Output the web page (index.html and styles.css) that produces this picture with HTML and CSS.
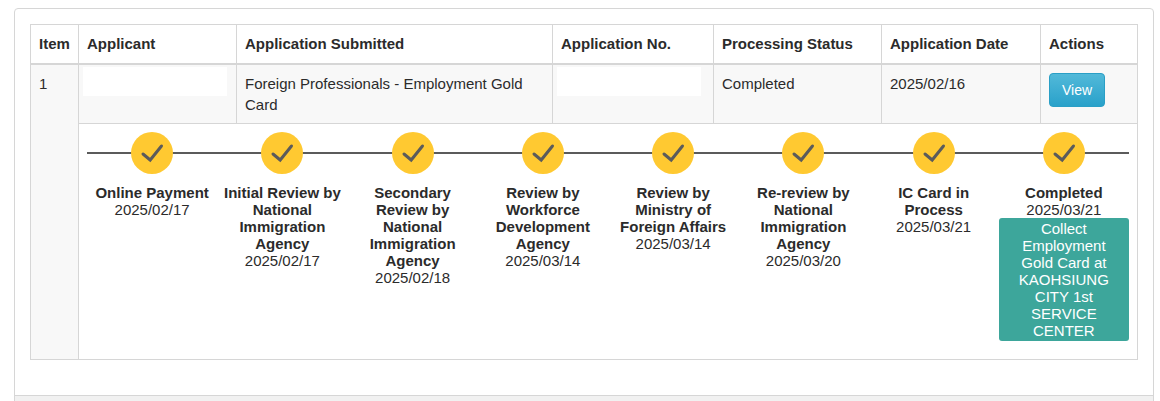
FILE: index.html
```html
<!DOCTYPE html>
<html lang="en">
<head>
    <meta charset="UTF-8">
    <meta name="viewport" content="width=device-width, initial-scale=1.0">
    <title>Application Status</title>
    <link rel="stylesheet" href="styles.css">
</head>
<body>
    <svg class="symbols" aria-hidden="true">
        <symbol id="check" viewBox="0 0 42 42">
            <circle cx="21" cy="21" r="21" fill="#ffc931"/>
            <path d="M12 22 L19.2 28 L30.5 14" fill="none" stroke="#5b5b5b" stroke-width="3" stroke-linecap="round"/>
        </symbol>
    </svg>

    <div class="panel">
        <div class="panel-body">
            <table class="table">
                <thead>
                    <tr>
                        <th class="col-item">Item</th>
                        <th class="col-applicant">Applicant</th>
                        <th>Application Submitted</th>
                        <th class="col-no">Application No.</th>
                        <th class="col-status">Processing Status</th>
                        <th class="col-date">Application Date</th>
                        <th class="col-actions">Actions</th>
                    </tr>
                </thead>
                <tbody>
                    <tr class="record">
                        <td rowspan="2">1</td>
                        <td class="masked"><div class="mask"></div></td>
                        <td>Foreign Professionals - Employment Gold Card</td>
                        <td class="masked"><div class="mask"></div></td>
                        <td>Completed</td>
                        <td>2025/02/16</td>
                        <td><button type="button" class="btn">View</button></td>
                    </tr>
                    <tr>
                        <td colspan="6">
                            <ol class="steps">
                                <li>
                                    <svg class="icon"><use href="#check"/></svg>
                                    <strong>Online Payment</strong>
                                    <span>2025/02/17</span>
                                </li>
                                <li>
                                    <svg class="icon"><use href="#check"/></svg>
                                    <strong>Initial Review by National Immigration Agency</strong>
                                    <span>2025/02/17</span>
                                </li>
                                <li>
                                    <svg class="icon"><use href="#check"/></svg>
                                    <strong>Secondary Review by National Immigration Agency</strong>
                                    <span>2025/02/18</span>
                                </li>
                                <li>
                                    <svg class="icon"><use href="#check"/></svg>
                                    <strong>Review by Workforce Development Agency</strong>
                                    <span>2025/03/14</span>
                                </li>
                                <li>
                                    <svg class="icon"><use href="#check"/></svg>
                                    <strong>Review by Ministry of Foreign Affairs</strong>
                                    <span>2025/03/14</span>
                                </li>
                                <li>
                                    <svg class="icon"><use href="#check"/></svg>
                                    <strong>Re-review by National Immigration Agency</strong>
                                    <span>2025/03/20</span>
                                </li>
                                <li>
                                    <svg class="icon"><use href="#check"/></svg>
                                    <strong>IC Card in Process</strong>
                                    <span>2025/03/21</span>
                                </li>
                                <li>
                                    <svg class="icon"><use href="#check"/></svg>
                                    <strong>Completed</strong>
                                    <span>2025/03/21</span>
                                    <div class="notice">Collect Employment Gold Card at KAOHSIUNG CITY 1st SERVICE CENTER</div>
                                </li>
                            </ol>
                        </td>
                    </tr>
                </tbody>
            </table>
        </div>
        <div class="panel-footer"></div>
    </div>
</body>
</html>
```

FILE: styles.css
```css
* {
    box-sizing: border-box;
}
body {
    margin: 8px 6px 0 14px;
    overflow: hidden;
    background: #fff;
    color: #2b2b2b;
    font: 15px/21px "Liberation Sans", Arial, sans-serif;
}
.symbols {
    display: none;
}
.panel {
    border: 1px solid #d6d6d6;
    border-radius: 4px;
    overflow: hidden;
}
.panel-body {
    padding: 15px 15px 35px;
}
.panel-footer {
    padding: 10px 15px;
    background: #f1f1f1;
    border-top: 1px solid #d6d6d6;
}
.table {
    width: 100%;
    table-layout: fixed;
    border-collapse: collapse;
}
.table th,
.table td {
    padding: 8px;
    border: 1px solid #d6d6d6;
    text-align: left;
    vertical-align: top;
}
.table th {
    padding-bottom: 9px;
    border-bottom-width: 2px;
}
.col-item {
    width: 48px;
}
.col-applicant {
    width: 158px;
}
.col-no {
    width: 161px;
}
.col-status {
    width: 168px;
}
.col-date {
    width: 159px;
}
.col-actions {
    width: 97px;
}
.record td {
    background: #f8f8f8;
}
.table .masked {
    padding: 2px 4px;
}
.mask {
    max-width: 144px;
    height: 29px;
    background: #fff;
}
.btn {
    display: block;
    padding: 6px 12px;
    border: 1px solid #2a9fc6;
    border-radius: 4px;
    background: linear-gradient(#52b9d9, #29a1ca);
    color: #fff;
    font: 14px/20px "Liberation Sans", Arial, sans-serif;
    cursor: pointer;
}

/* progress steps, the line runs behind the circles */
.steps {
    display: flex;
    margin: 0 0 10px;
    padding: 0;
    list-style: none;
    line-height: 17px;
    text-align: center;
    background: linear-gradient(#5b5b5b, #5b5b5b) 0 20px / 100% 2px no-repeat;
}
.steps li {
    flex: 1 1 0;
    min-width: 0;
}
.steps strong,
.steps span {
    display: block;
}
.icon {
    display: block;
    width: 42px;
    height: 42px;
    margin: 0 auto 10px;
}
.steps strong {
    padding: 0 6px;
}
.notice {
    padding: 2px 12px;
    border-radius: 3px;
    background: #3da69b;
    color: #fff;
}
```
